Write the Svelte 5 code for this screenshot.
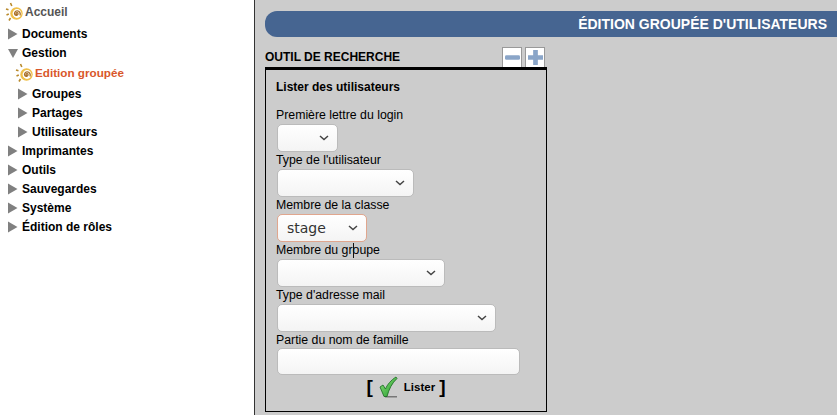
<script>
  const menu = [
    { label: 'Documents', arrow: 'right' },
    { label: 'Gestion', arrow: 'down' },
    { label: 'Edition groupée', sun: true, sub: true },
    { label: 'Groupes', arrow: 'right', sub: true },
    { label: 'Partages', arrow: 'right', sub: true },
    { label: 'Utilisateurs', arrow: 'right', sub: true },
    { label: 'Imprimantes', arrow: 'right' },
    { label: 'Outils', arrow: 'right' },
    { label: 'Sauvegardes', arrow: 'right' },
    { label: 'Système', arrow: 'right' },
    { label: 'Édition de rôles', arrow: 'right' }
  ];

  const fields = [
    { label: 'Première lettre du login', width: 61 },
    { label: "Type de l'utilisateur", width: 137 },
    { label: 'Membre de la classe', width: 90, value: 'stage' },
    { label: 'Membre du groupe', width: 168 },
    { label: "Type d'adresse mail", width: 219 }
  ];
</script>

{#snippet sun()}
  <svg class="sun" viewBox="0 0 20 20" width="20" height="20">
    <circle cx="11.500" cy="11.500" r="6.200" fill="#f0c04a" />
    <circle cx="12" cy="11.500" r="4.400" fill="#fff" />
    <path d="M12 12.700a1 1 0 1 1 1-1.400c.3 1.600-1.800 2.800-3 1.500-1.200-1.500 0-4 2.200-3.900 2.400.1 3.600 2.500 2.800 4.500" fill="none" stroke="#a8702a" stroke-width="1.300" />
    <path d="M5.500 1l1.300 3M1 7l2.500.8M1.500 13l2.300-1M4 18.500l1.500-2.500" stroke="#b98a2c" stroke-width="1.600" fill="none" />
  </svg>
{/snippet}

<div class="page">
  <nav class="sidebar">
    <div class="home">
      {@render sun()}
      <span>Accueil</span>
    </div>
    <ul>
      {#each menu as item}
        <li class:sub={item.sub} class:current={item.sun}>
          {#if item.sun}
            {@render sun()}
          {:else if item.arrow === 'down'}
            <svg class="arrow" viewBox="0 0 10 12" width="10" height="12"><path d="M0 2h10L5 11z" fill="#808080" /></svg>
          {:else}
            <svg class="arrow" viewBox="0 0 10 12" width="10" height="12"><path d="M0 .5l9.500 5.500L0 11.500z" fill="#808080" /></svg>
          {/if}
          <span>{item.label}</span>
        </li>
      {/each}
    </ul>
  </nav>

  <main class="content">
    <h1 class="banner">ÉDITION GROUPÉE D'UTILISATEURS</h1>

    <div class="tool">
      <div class="tool-head">
        <h2>OUTIL DE RECHERCHE</h2>
        <div class="toggles">
          <button type="button" aria-label="Réduire">
            <svg viewBox="0 0 16 16" width="15" height="15"><rect x="0" y="5.500" width="16" height="5" rx="1.500" fill="#8aa5c8" /></svg>
          </button>
          <button type="button" aria-label="Agrandir">
            <svg viewBox="0 0 16 16" width="15" height="15"><path d="M5.500 0h5v5.500H16v5h-5.500V16h-5v-5.500H0v-5h5.500z" fill="#8aa5c8" /></svg>
          </button>
        </div>
      </div>

      <form class="panel">
        <h3>Lister des utilisateurs</h3>

        {#each fields as field}
          <label class="field">
            <span>{field.label}</span>
            <span class="select" style:width="{field.width}px" class:filled={field.value}>
              <select>
                {#if field.value}<option>{field.value}</option>{:else}<option></option>{/if}
              </select>
              <svg viewBox="0 0 10 6" width="10" height="6"><path d="M1 1l4 3.500L9 1" fill="none" stroke="#444" stroke-width="1.500" /></svg>
            </span>
          </label>
        {/each}

        <label class="field last">
          <span>Partie du nom de famille</span>
          <input type="text" />
        </label>

        <div class="submit">
          <span class="bracket">[</span>
          <svg viewBox="0 0 20 22" width="20" height="22">
            <defs>
              <linearGradient id="tick" x1="0" y1="0" x2="1" y2="1">
                <stop offset="0" stop-color="#8fe07a" />
                <stop offset="1" stop-color="#1f9a2c" />
              </linearGradient>
            </defs>
            <rect x="6" y="20" width="12" height="1.500" fill="#777" />
            <path d="M1 11l3-2 2.500 4C8 9 12 4 17 1l1 1.500C13 7 10 13 8 20.500H5z" fill="url(#tick)" stroke="#17691f" stroke-width="0.800" />
          </svg>
          <span class="go">Lister</span>
          <span class="bracket">]</span>
        </div>
      </form>
    </div>

    <!-- mouse pointer caught in the screenshot -->
    <div class="ibeam"></div>
  </main>
</div>

<style>
  :global(body) {
    margin: 0;
    overflow: hidden;
  }

  .page {
    display: flex;
    width: 837px;
    height: 415px;
    overflow: hidden;
    font-family: "Liberation Sans", Arial, sans-serif;
    font-size: 12px;
    color: #000;
    background: #ccc;
  }

  .sidebar {
    width: 255px;
    flex: none;
    box-sizing: border-box;
    background: #fff;
    border-right: 1px solid #333;
    font-weight: bold;
    padding: 2px 0 0 5px;
  }

  .home,
  li {
    display: flex;
    align-items: center;
    height: 19px;
  }

  .home {
    height: 20px;
    color: #555;
  }

  ul {
    list-style: none;
    margin: 0;
    padding: 2px 0 0 3px;
  }

  li .arrow {
    width: 10px;
    flex: none;
    margin-right: 4px;
  }

  li.sub {
    padding-left: 10px;
  }

  li.current {
    height: 21px;
    padding-bottom: 1px;
    color: #d9572b;
    font-size: 11.700px;
  }

  li.current .sun {
    margin-left: -3px;
  }

  .sun {
    flex: none;
  }

  .content {
    position: relative;
    flex: 1;
    padding: 11px 0 0 10px;
    min-width: 0;
  }

  .banner {
    margin: 0;
    height: 26px;
    line-height: 26px;
    box-sizing: border-box;
    padding-right: 10px;
    text-align: right;
    font-size: 14px;
    font-weight: bold;
    color: #fff;
    background: #466591;
    border-radius: 12px 0 0 12px;
  }

  .tool {
    width: 282px;
    margin-top: 10px;
  }

  .tool-head {
    display: flex;
    justify-content: space-between;
    align-items: flex-end;
    height: 20px;
  }

  h2 {
    margin: 0 0 3px;
    font-size: 12px;
  }

  .toggles {
    display: flex;
    gap: 3px;
    margin-right: 2px;
  }

  .toggles button {
    width: 20px;
    height: 20px;
    padding: 0;
    display: flex;
    align-items: center;
    justify-content: center;
    background: #fff;
    border: 1px solid #999;
    border-bottom: 0;
  }

  .panel {
    height: 345px;
    box-sizing: border-box;
    border: 1px solid #000;
    border-top-width: 3px;
    padding: 10px 10px 0;
  }

  h3 {
    margin: 0 0 14px;
    font-size: 12px;
    line-height: 14px;
  }

  .field {
    display: block;
    line-height: 14px;
    margin-bottom: 1px;
    font-size: 12.300px;
  }

  .field > span:first-child {
    display: block;
    height: 16px;
  }

  .field.last {
    margin-bottom: 0;
  }

  .field.last > span:first-child {
    height: 15px;
  }

  .select {
    position: relative;
    display: block;
    height: 28px;
    margin-left: 1px;
  }

  select,
  input {
    display: block;
    width: 100%;
    height: 100%;
    box-sizing: border-box;
    appearance: none;
    margin: 0;
    border: 1px solid #bbb;
    border-radius: 5px;
    background: linear-gradient(#fff, #f4f4f4);
    font-family: "Liberation Sans", Arial, sans-serif;
  }

  .select svg {
    position: absolute;
    right: 9px;
    top: 11px;
  }

  .filled select {
    border-color: #e0a68e;
    padding-left: 9px;
    font-family: "DejaVu Sans", sans-serif;
    font-size: 14px;
    color: #333;
  }

  input {
    width: 243px;
    height: 27px;
    margin-left: 1px;
  }

  .submit {
    display: flex;
    align-items: center;
    justify-content: center;
    height: 24px;
    font-size: 11.500px;
    font-weight: bold;
  }

  .bracket {
    font-size: 19px;
    line-height: 20px;
  }

  .go {
    margin: 0 4px 0 5px;
  }

  .submit svg {
    margin-left: 6px;
  }

  .ibeam {
    position: absolute;
    left: 98px;
    top: 243px;
    width: 1px;
    height: 15px;
    background: #111;
  }
</style>
